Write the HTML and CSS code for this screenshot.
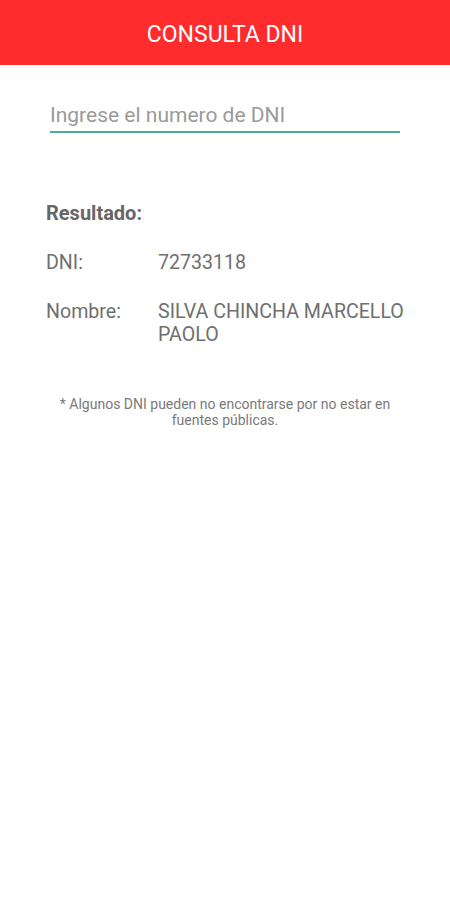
FILE: index.html
```html
<!DOCTYPE html>
<html lang="es">
<head>
<meta charset="utf-8">
<title>Consulta DNI</title>
<link rel="stylesheet" href="styles.css">
</head>
<body>
<header class="appbar">CONSULTA DNI</header>
<main class="content">
  <div class="field">
    <span class="placeholder">Ingrese el numero de DNI</span>
  </div>
  <section class="result">
    <h2 class="result-title">Resultado:</h2>
    <div class="row">
      <span class="label">DNI:</span>
      <span class="value">72733118</span>
    </div>
    <div class="row">
      <span class="label">Nombre:</span>
      <span class="value">SILVA CHINCHA MARCELLO PAOLO</span>
    </div>
  </section>
  <p class="note">* Algunos DNI pueden no encontrarse por no estar en<br>fuentes públicas.</p>
</main>
</body>
</html>
```
FILE: styles.css
```css
html, body {
  margin: 0;
  padding: 0;
  background: #ffffff;
  font-family: Roboto, "Liberation Sans", sans-serif;
}
.appbar {
  height: 65px;
  background: #ff2c2e;
  color: #ffffff;
  font-size: 23px;
  display: flex;
  align-items: center;
  justify-content: center;
  padding-top: 3px;
  box-sizing: border-box;
}
.content {
  padding: 0 30px 0 46px;
}
.field {
  margin: 36px 20px 0 4px;
  height: 30px;
  border-bottom: 2px solid #4aab9f;
  display: flex;
  align-items: flex-start;
}
.placeholder {
  font-size: 21px;
  color: #9a9a9a;
  line-height: 28px;
}
.result {
  margin-top: 68px;
}
.result-title {
  margin: 0;
  font-size: 20px;
  font-weight: 700;
  color: #666666;
  line-height: 24px;
}
.row {
  display: flex;
  margin-top: 26px;
  font-size: 19.6px;
  color: #6f6f6f;
  line-height: 23px;
}
.label {
  width: 112px;
  flex: none;
}
.value {
  flex: 1;
}
.note {
  margin: 50px 6px 0 -10px;
  text-align: center;
  font-size: 14px;
  line-height: 16px;
  color: #7a7a7a;
}
```
